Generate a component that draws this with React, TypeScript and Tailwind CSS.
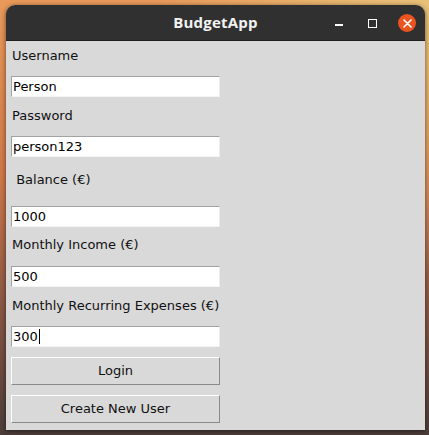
const fields = [
  { label: "Username", value: "Person", labelMt: "mt-[5px]", entryMt: "mt-[10px]" },
  { label: "Password", value: "person123", labelMt: "mt-[9px]", entryMt: "mt-[10px]" },
  { label: " Balance (€)", value: "1000", labelMt: "mt-[13px]", entryMt: "mt-[16px]" },
  { label: "Monthly Income (€)", value: "500", labelMt: "mt-[8px]", entryMt: "mt-[11px]" },
  { label: "Monthly Recurring Expenses (€)", value: "300", labelMt: "mt-[9px]", entryMt: "mt-[10px]", focused: true },
];

function Entry({ value, focused, className }: { value: string; focused?: boolean; className: string }) {
  return (
    <div
      className={`${className} flex h-[21px] w-[209px] items-center border border-t-[#a3a3a3] border-l-[#a3a3a3] border-r-[#ececec] border-b-[#f4f4f4] bg-white pl-[1px] text-[13px] leading-none text-black`}
    >
      <span className="whitespace-pre">{value}</span>
      {focused && <span className="ml-[1px] h-[15px] w-px bg-black" />}
    </div>
  );
}

function TkButton({ label, className }: { label: string; className: string }) {
  return (
    <div
      className={`${className} flex h-[28px] w-[209px] items-center justify-center border border-t-white border-l-white border-r-[#8a8a8a] border-b-[#8a8a8a] bg-[#d9d9d9] text-[13px] text-[#111]`}
    >
      {label}
    </div>
  );
}

export default function App() {
  return (
    <div className="h-[435px] w-[429px] overflow-hidden bg-[radial-gradient(circle_at_100%_0%,#e9c27a_0%,transparent_45%),linear-gradient(180deg,#e99a5a_0%,#d0784a_40%,#8a5845_70%,#4c3d3b_100%)] pl-[6px] pt-[5px] font-['DejaVu_Sans',sans-serif]">
      <div className="flex h-[425px] w-[419px] flex-col overflow-hidden rounded-t-[9px] bg-[#d9d9d9] shadow-[0_1px_5px_rgba(0,0,0,0.55)]">
        <div className="relative flex h-[36px] shrink-0 items-center justify-center border-b border-[#1e1e1e] bg-[#303030]">
          <span className="font-['Open_Sans',sans-serif] text-[15px] font-bold tracking-[0.2px] text-[#f2f2f2]">
            BudgetApp
          </span>
          <div className="absolute right-[9px] top-[9px] flex items-center">
            <span className="mt-[4px] h-[1.5px] w-[8px] bg-white" />
            <span className="ml-[25px] h-[9px] w-[9px] border-[1.5px] border-white" />
            <span className="ml-[21px] flex h-[18px] w-[18px] items-center justify-center rounded-full bg-[#e95420]">
              <svg width="9" height="9" viewBox="0 0 9 9">
                <path d="M1 1L8 8M8 1L1 8" stroke="white" strokeWidth="1.6" strokeLinecap="round" />
              </svg>
            </span>
          </div>
        </div>
        <div className="flex flex-col pl-[5px]">
          {fields.map((f) => (
            <div key={f.label} className="flex flex-col">
              <div className={`${f.labelMt} flex h-[20px] items-center whitespace-pre pl-[1px] text-[13px] text-[#111]`}>
                {f.label}
              </div>
              <Entry value={f.value} focused={f.focused} className={f.entryMt} />
            </div>
          ))}
          <TkButton label="Login" className="mt-[10px]" />
          <TkButton label="Create New User" className="mt-[10px]" />
        </div>
      </div>
    </div>
  );
}
